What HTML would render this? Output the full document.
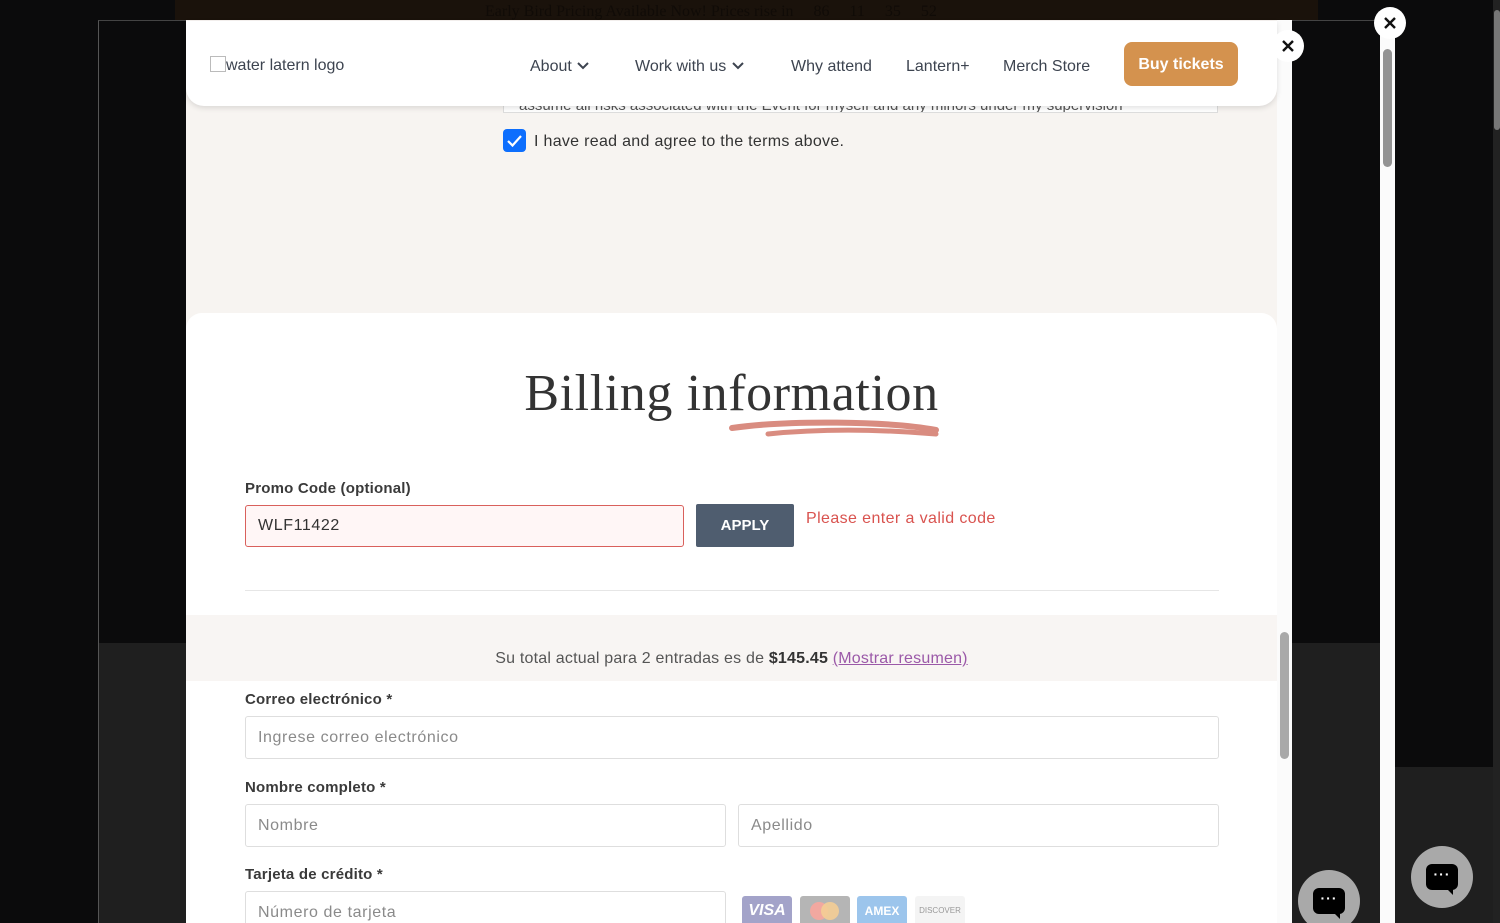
<!DOCTYPE html>
<html><head><meta charset="utf-8"><style>
*{box-sizing:border-box;margin:0;padding:0}
html,body{width:1500px;height:923px;overflow:hidden}
body{background:#0b0b0c;position:relative;font-family:"Liberation Sans",sans-serif}
.abs{position:absolute}
.lbl{position:absolute;left:245px;font-size:15px;font-weight:bold;color:#3a3a3a;letter-spacing:.2px}
.inp{position:absolute;border:1px solid #dedede;border-radius:3px;background:#fff;font-size:16px;color:#8a8a8a;padding-left:12px;display:flex;align-items:center;letter-spacing:.6px}
.x{position:absolute;width:32px;height:32px;border-radius:50%;background:#fff;display:flex;align-items:center;justify-content:center}
.chat{position:absolute;width:62px;height:62px;border-radius:50%;background:#a9a9a9;display:flex;align-items:center;justify-content:center}
.bub{width:32px;height:26px;background:#000;border-radius:6px;position:relative;color:#fff;font-size:14px;text-align:center;line-height:20px;font-weight:bold;letter-spacing:1px}
.bub:after{content:"";position:absolute;right:5px;bottom:-5px;border-left:6px solid transparent;border-top:6px solid #000}
.nav{position:absolute;top:56px;font-size:16px;color:#3d4450}
</style></head><body>
<div class="abs" style="left:175px;top:0;width:1143px;height:20px;background:#1a120b"></div>
<div class="abs" style="left:485px;top:3px;font-family:'Liberation Serif',serif;font-size:16px;color:#0a0705;opacity:.6">Early Bird Pricing Available Now! Prices rise in &nbsp;&nbsp;&nbsp; 86 &nbsp;&nbsp;&nbsp; 11 &nbsp;&nbsp;&nbsp; 35 &nbsp;&nbsp;&nbsp; 52</div>
<div class="abs" style="left:98px;top:20px;width:1282px;height:903px;background:#0b0b0c;border-left:1px solid #555;border-top:1px solid #444"></div>
<div class="abs" style="left:99px;top:643px;width:1281px;height:280px;background:#1f1f1f"></div>
<div class="abs" style="left:1395px;top:767px;width:98px;height:156px;background:#1f1f1f"></div>
<div class="abs" style="left:1380px;top:28px;width:15px;height:895px;background:#fbfbfb"></div>
<div class="abs" style="left:1383px;top:49px;width:9px;height:118px;background:#939393;border-radius:5px"></div>
<div class="abs" style="left:1493px;top:0;width:7px;height:923px;background:#222"></div>
<div class="abs" style="left:1494px;top:10px;width:6px;height:120px;background:#777;border-radius:3px"></div>
<div class="abs" style="left:186px;top:20px;width:1091px;height:903px;background:#f7f4f1"></div>
<div class="abs" style="left:1277px;top:20px;width:15px;height:903px;background:#fbfbfb"></div>
<div class="abs" style="left:1280px;top:632px;width:9px;height:127px;background:#a9a9a9;border-radius:5px"></div>
<div class="abs" style="left:503px;top:100px;width:715px;height:13px;border:1px solid #ddd;border-top:none;background:#fff;overflow:hidden;font-size:15px;color:#555;padding-left:15px;line-height:12px">assume all risks associated with the Event for myself and any minors under my supervision</div>
<div class="abs" style="left:186px;top:21px;width:1091px;height:85px;background:#fff;border-radius:0 0 18px 18px;box-shadow:0 2px 6px rgba(0,0,0,.12)"></div>
<div class="abs" style="left:210px;top:56px;font-size:16px;color:#3d4450"><span style="display:inline-block;width:16px;height:16px;border:1px solid #bbb;vertical-align:-2px;margin-right:0"></span>water latern logo</div>
<div class="nav" style="left:530px;top:58px">About <svg width="14" height="10" viewBox="0 0 14 10"><path d="M2 2l5 5 5-5" stroke="#3d4450" stroke-width="2" fill="none"/></svg></div>
<div class="nav" style="left:635px;top:58px">Work with us <svg width="14" height="10" viewBox="0 0 14 10"><path d="M2 2l5 5 5-5" stroke="#3d4450" stroke-width="2" fill="none"/></svg></div>
<div class="nav" style="left:791px;top:58px">Why attend</div>
<div class="nav" style="left:906px;top:58px">Lantern+</div>
<div class="nav" style="left:1003px;top:58px">Merch Store</div>
<div class="abs" style="left:1124px;top:42px;width:114px;height:44px;background:#d4924e;border-radius:8px;color:#fff;font-size:16px;font-weight:bold;display:flex;align-items:center;justify-content:center;padding-top:2px">Buy tickets</div>
<div class="x" style="left:1272px;top:30px"><svg width="14" height="14"><path d="M2 2l10 10M12 2L2 12" stroke="#111" stroke-width="2.4"/></svg></div>
<div class="x" style="left:1374px;top:7px"><svg width="14" height="14"><path d="M2 2l10 10M12 2L2 12" stroke="#111" stroke-width="2.4"/></svg></div>
<div class="abs" style="left:503px;top:129px;width:23px;height:23px;background:#0d6efd;border-radius:4px"><svg width="23" height="23"><path d="M5 12l4.5 4.5L18 7" stroke="#fff" stroke-width="2.2" fill="none"/></svg></div>
<div class="abs" style="left:534px;top:133px;font-size:16px;color:#333;letter-spacing:.3px">I have read and agree to the terms above.</div>
<div class="abs" style="left:186px;top:313px;width:1091px;height:610px;background:#fff;border-radius:16px 16px 0 0"></div>
<div class="abs" style="left:186px;top:364px;width:1091px;text-align:center;font-family:'Liberation Serif',serif;font-size:52px;color:#333;letter-spacing:.6px">Billing information</div>
<svg class="abs" style="left:728px;top:418px" width="214" height="24" viewBox="0 0 214 24"><path d="M4 10C60 2 160 3 208 12" stroke="#d98c80" stroke-width="6" fill="none" stroke-linecap="round"/><path d="M40 16C100 10 160 12 208 16" stroke="#d98c80" stroke-width="5" fill="none" stroke-linecap="round"/></svg>
<div class="lbl" style="top:480px">Promo Code (optional)</div>
<div class="inp" style="left:245px;top:505px;width:439px;height:42px;border-color:#d9605c;background:#fff6f6;color:#333">WLF11422</div>
<div class="abs" style="left:696px;top:504px;width:98px;height:43px;background:#4f5d6f;border-radius:2px;color:#fff;font-weight:bold;font-size:15px;display:flex;align-items:center;justify-content:center">APPLY</div>
<div class="abs" style="left:806px;top:510px;font-size:16px;color:#d9534f;letter-spacing:.4px">Please enter a valid code</div>
<div class="abs" style="left:245px;top:590px;width:974px;height:1px;background:#e6e6e6"></div>
<div class="abs" style="left:186px;top:615px;width:1091px;height:66px;background:#f8f5f3"></div>
<div class="abs" style="left:186px;top:650px;width:1091px;text-align:center;font-size:16px;color:#555;letter-spacing:.2px">Su total actual para 2 entradas es de <b style="color:#333">$145.45</b> <span style="color:#9b59a8;text-decoration:underline">(Mostrar resumen)</span></div>
<div class="lbl" style="top:691px">Correo electrónico *</div>
<div class="inp" style="left:245px;top:716px;width:974px;height:43px">Ingrese correo electrónico</div>
<div class="lbl" style="top:779px">Nombre completo *</div>
<div class="inp" style="left:245px;top:804px;width:481px;height:43px">Nombre</div>
<div class="inp" style="left:738px;top:804px;width:481px;height:43px">Apellido</div>
<div class="lbl" style="top:866px">Tarjeta de crédito *</div>
<div class="inp" style="left:245px;top:891px;width:481px;height:43px;align-items:flex-start;padding-top:12px">Número de tarjeta</div>
<div class="abs" style="left:742px;top:896px;width:50px;height:30px;background:#a3a3c9;border-radius:3px;color:#fff;font-weight:bold;font-style:italic;font-size:16px;text-align:center;line-height:30px">VISA</div>
<div class="abs" style="left:800px;top:896px;width:50px;height:30px;background:#b5b5b5;border-radius:3px"><div class="abs" style="left:10px;top:6px;width:18px;height:18px;border-radius:50%;background:#f2a8a0"></div><div class="abs" style="left:21px;top:6px;width:18px;height:18px;border-radius:50%;background:#f4cd95;opacity:.9"></div></div>
<div class="abs" style="left:857px;top:896px;width:50px;height:30px;background:#9cc5ec;border-radius:3px;color:#fff;font-weight:bold;font-size:12px;text-align:center;line-height:30px">AMEX</div>
<div class="abs" style="left:915px;top:896px;width:50px;height:30px;background:#f4f4f4;border-radius:3px;color:#999;font-size:8px;text-align:center;line-height:30px">DISCOVER</div>
<div class="chat" style="left:1298px;top:870px"><div class="bub">···</div></div>
<div class="chat" style="left:1411px;top:846px"><div class="bub">···</div></div>
</body></html>
